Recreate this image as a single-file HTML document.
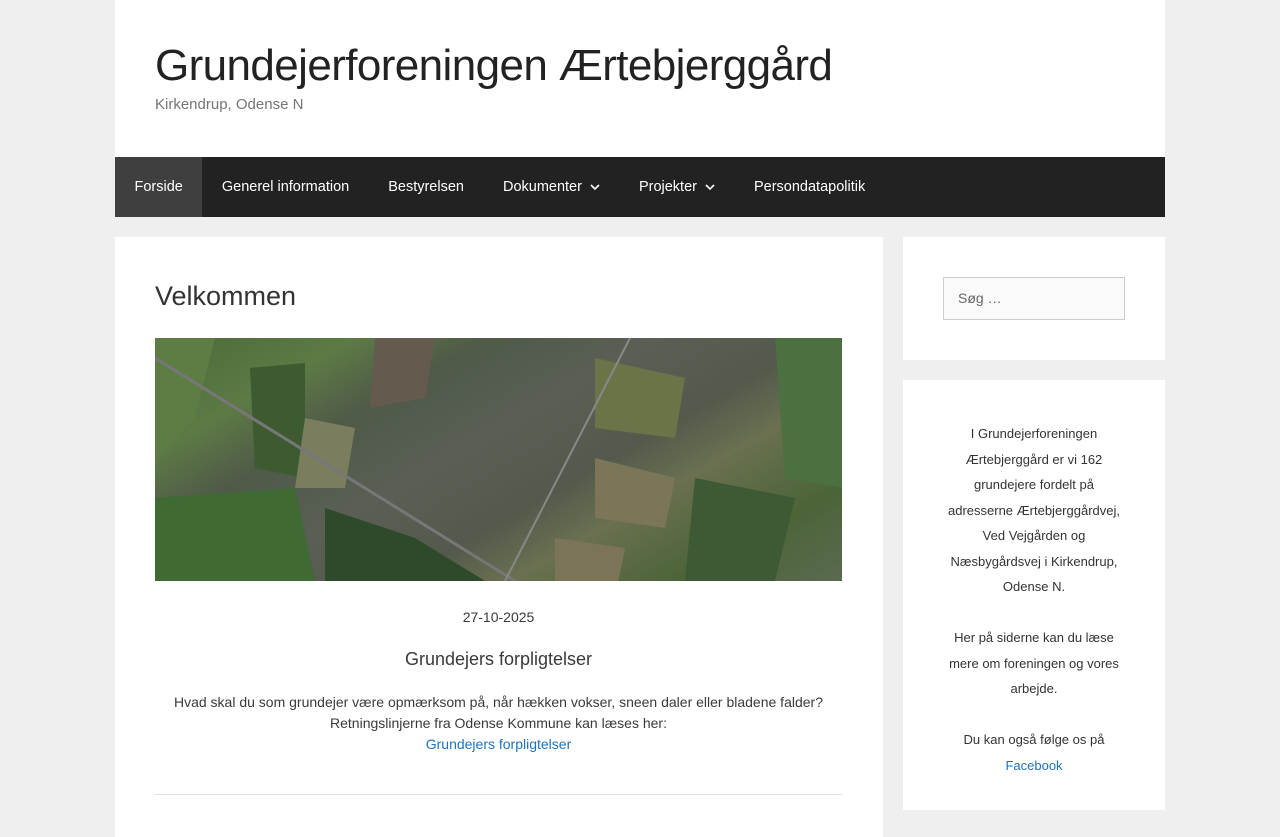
<!DOCTYPE html>
<html><head><meta charset="utf-8"><style>
*{margin:0;padding:0;box-sizing:border-box}
body{background:#efefef;font-family:"Liberation Sans",sans-serif;color:#3a3a3a;width:1280px;height:800px;overflow:hidden}
header{position:absolute;left:115px;top:0;width:1050px;height:157px;background:#fff}
header h1{position:absolute;left:40px;top:41px;font-size:44px;font-weight:400;color:#222;letter-spacing:-0.6px}
header p{position:absolute;left:40px;top:96px;font-size:15px;color:#757575}
nav{position:absolute;left:115px;top:157px;width:1050px;height:60px;background:#222;display:flex}
nav a{color:#fff;font-size:14.5px;line-height:60px;padding:0 19.5px;text-decoration:none}
nav a.on{background:#3f3f3f}
nav svg{margin-left:8px;vertical-align:middle}
.main{position:absolute;left:115px;top:237px;width:768px;height:600px;background:#fff}
.main h2{position:absolute;left:40px;top:44px;font-size:27px;font-weight:400;color:#333}
.img{position:absolute;left:40px;top:101px;width:687px;height:243px;overflow:hidden;
background:linear-gradient(150deg,#4a6a38 0%,#5d7a45 18%,#4f5a48 30%,#5a5f55 45%,#535a4c 60%,#6a7050 70%,#4c6438 85%,#5a6a50 100%)}
.c{position:absolute;text-align:center;width:687px;left:40px;font-size:14px;color:#3a3a3a}
.side1{position:absolute;left:903px;top:237px;width:262px;height:123px;background:#fff}
.side1 .in{position:absolute;left:40px;top:40px;width:182px;height:43px;border:1px solid #ccc;background:#fafafa;font-size:14px;color:#666;padding:12px 14px}
.side2{position:absolute;left:903px;top:380px;width:262px;height:430px;background:#fff;text-align:center;font-size:13px;line-height:25.5px;color:#333;padding:41px 40px 0}
a.l{color:#1e73be;text-decoration:none}
</style></head><body>
<header><h1>Grundejerforeningen Ærtebjerggård</h1><p>Kirkendrup, Odense N</p></header>
<nav><a class="on">Forside</a><a>Generel information</a><a>Bestyrelsen</a><a>Dokumenter<svg width="10" height="7" viewBox="0 0 10 7"><path d="M1 1l4 4 4-4" stroke="#fff" stroke-width="1.6" fill="none"/></svg></a><a>Projekter<svg width="10" height="7" viewBox="0 0 10 7"><path d="M1 1l4 4 4-4" stroke="#fff" stroke-width="1.6" fill="none"/></svg></a><a>Persondatapolitik</a></nav>
<div class="main"><h2>Velkommen</h2>
<div class="img"><svg width="687" height="243">
<polygon points="0,0 60,0 40,80 0,120" fill="#5d7d44"/>
<polygon points="95,30 150,25 150,140 100,130" fill="#3d5a30"/>
<polygon points="150,80 200,90 190,150 140,150" fill="#7a7d5e"/>
<polygon points="0,160 140,150 160,243 0,243" fill="#3f6a34"/>
<polygon points="170,170 260,200 330,243 170,243" fill="#2f4a2a"/>
<polygon points="440,20 530,40 520,100 440,90" fill="#6a7448"/>
<polygon points="440,120 520,140 510,190 440,180" fill="#7b7658"/>
<polygon points="400,200 470,210 460,260 400,250" fill="#7c7458"/>
<polygon points="620,0 687,0 687,150 630,140" fill="#4c7040"/>
<polygon points="540,140 640,160 620,243 530,243" fill="#3e5a34"/>
<polygon points="220,0 280,0 270,60 215,70" fill="#655a4e"/>
<line x1="0" y1="20" x2="360" y2="243" stroke="#777" stroke-width="3"/>
<line x1="475" y1="0" x2="350" y2="243" stroke="#888" stroke-width="2"/>
</svg></div>
<div class="c" style="top:372px">27-10-2025</div>
<div class="c" style="top:412px;font-size:18px">Grundejers forpligtelser</div>
<div class="c" style="top:455px;line-height:21px">Hvad skal du som grundejer være opmærksom på, når hækken vokser, sneen daler eller bladene falder?<br>Retningslinjerne fra Odense Kommune kan læses her:<br><a class="l">Grundejers forpligtelser</a></div>
<div style="position:absolute;left:40px;top:557px;width:687px;border-top:1px solid #ddd"></div>
</div>
<div class="side1"><div class="in">Søg …</div></div>
<div class="side2">I Grundejerforeningen Ærtebjerggård er vi 162 grundejere fordelt på adresserne Ærtebjerggårdvej, Ved Vejgården og Næsbygårdsvej i Kirkendrup, Odense N.<br><br>Her på siderne kan du læse mere om foreningen og vores arbejde.<br><br>Du kan også følge os på<br><a class="l">Facebook</a></div>
</body></html>
